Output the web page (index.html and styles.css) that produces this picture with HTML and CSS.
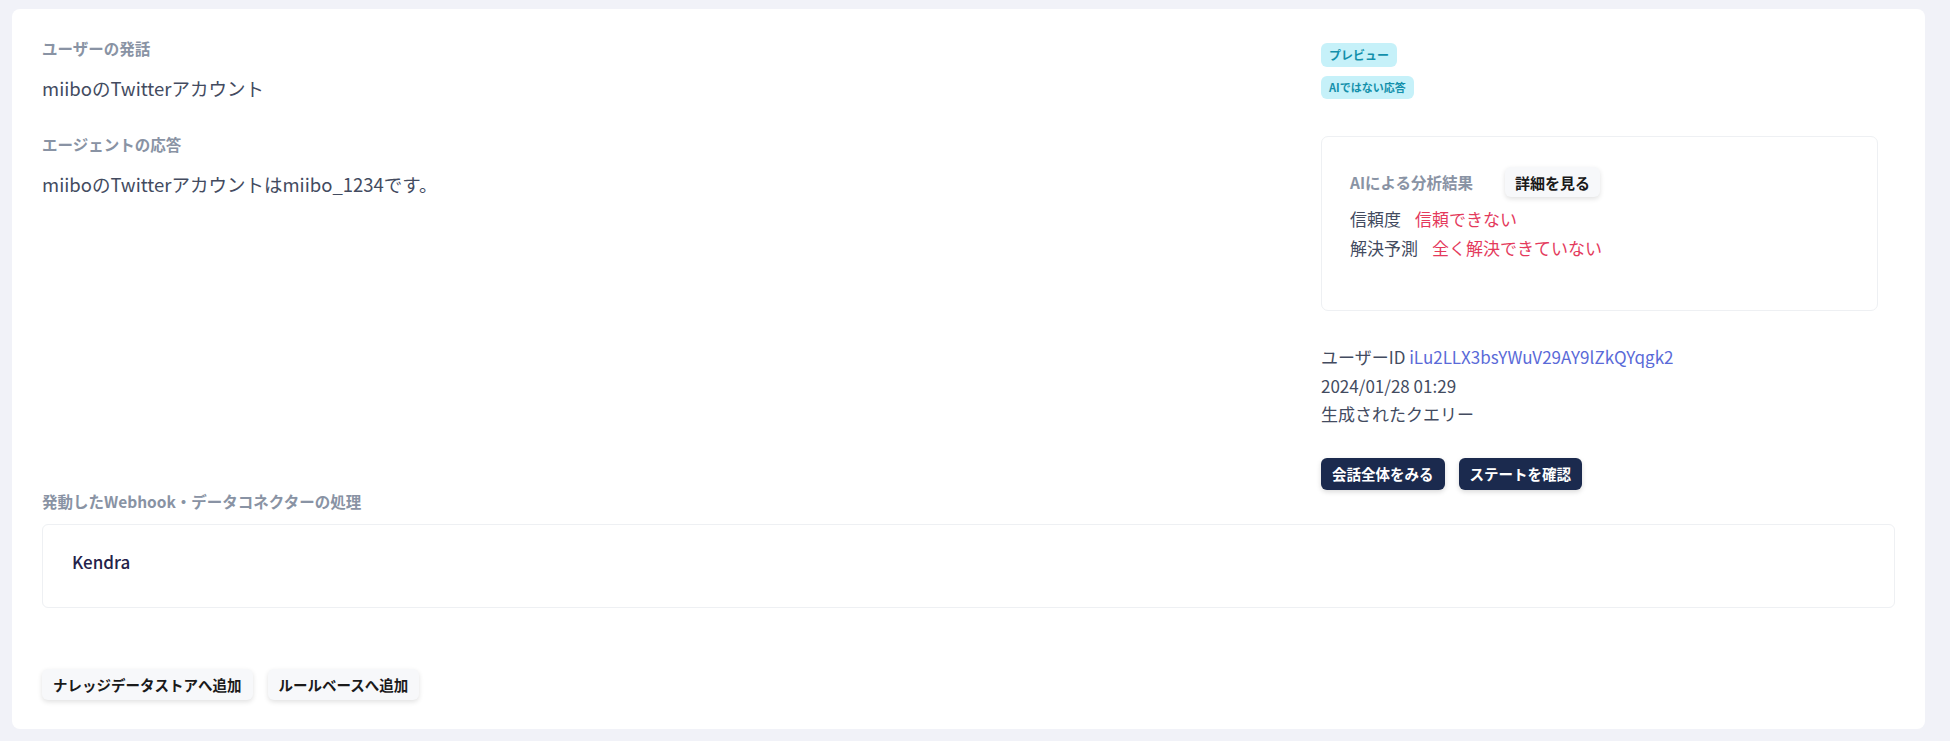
FILE: index.html
```html
<!DOCTYPE html>
<html lang="ja">
<head>
  <meta charset="UTF-8">
  <title>会話ログ詳細</title>
  <link rel="stylesheet" href="styles.css">
</head>
<body>
  <div class="card">
    <div class="top">
      <div class="main">
        <div class="label">ユーザーの発話</div>
        <p class="value">miiboのTwitterアカウント</p>
        <div class="label label-gap">エージェントの応答</div>
        <p class="value">miiboのTwitterアカウントはmiibo_1234です。</p>
      </div>

      <div class="side">
        <div class="badges">
          <span class="badge">プレビュー</span>
          <span class="badge badge-sm">AIではない応答</span>
        </div>

        <div class="analysis">
          <div class="analysis-head">
            <span class="analysis-title">AIによる分析結果</span>
            <button class="btn-light btn-detail">詳細を見る</button>
          </div>
          <div class="row"><span class="key">信頼度</span><span class="bad">信頼できない</span></div>
          <div class="row"><span class="key">解決予測</span><span class="bad">全く解決できていない</span></div>
        </div>

        <div class="meta">
          <div>ユーザーID <a href="#" class="uid">iLu2LLX3bsYWuV29AY9lZkQYqgk2</a></div>
          <div>2024/01/28 01:29</div>
          <div>生成されたクエリー</div>
        </div>

        <div class="actions">
          <button class="btn-dark">会話全体をみる</button>
          <button class="btn-dark">ステートを確認</button>
        </div>
      </div>
    </div>

    <div class="label">発動したWebhook・データコネクターの処理</div>
    <div class="connector">
      <span class="connector-name">Kendra</span>
    </div>

    <div class="bottom-actions">
      <button class="btn-light">ナレッジデータストアへ追加</button>
      <button class="btn-light">ルールベースへ追加</button>
    </div>
  </div>
</body>
</html>
```

FILE: styles.css
```css
body { margin: 0; background: #f1f2f8; font-family: "Noto Sans CJK JP", "Noto Sans", sans-serif; color: #434b5f; }
.card { margin: 9px 25px 12px 12px; height: 720px; box-sizing: border-box; background: #fff; border-radius: 8px; padding: 28px 30px 29px 30px; }

.top { display: grid; grid-template-columns: 1fr 574px; }
.label { font-size: 15.5px; font-weight: 700; color: #8993a4; line-height: 22px; }
.label-gap { margin-top: 31px; }
.value { margin: 15px 0 0; font-size: 18.5px; line-height: 28px; color: #434b5f; }

.side { padding-right: 17px; }
.badges { display: flex; flex-direction: column; align-items: flex-start; gap: 9px; margin-top: 6px; }
.badge { background: #c6f1f9; color: #1390ab; font-weight: 700; font-size: 12px; border-radius: 6px; height: 24px; line-height: 24px; padding: 0 8px; }
.badge-sm { font-size: 11px; height: 23px; line-height: 23px; padding: 0 8px; }

.analysis { margin-top: 37px; height: 175px; box-sizing: border-box; border: 1px solid #eef0f3; border-radius: 7px; padding: 30px 28px; }
.analysis-head { display: flex; align-items: center; gap: 32px; margin-bottom: 7px; }
.analysis-title { font-size: 15.5px; font-weight: 700; color: #8993a4; }
.row { font-size: 17px; line-height: 29px; }
.key { color: #434b5f; margin-right: 14px; }
.bad { color: #e43a5c; }

.meta { margin-top: 32px; font-size: 17px; line-height: 28.5px; color: #434b5f; }
.uid { color: #5a6ad8; text-decoration: none; }

.actions { display: flex; gap: 14px; margin-top: 29px; }
button { font-family: inherit; font-weight: 700; font-size: 14.5px; border: none; border-radius: 6px; cursor: pointer; }
.btn-dark { background: #1b2a4e; color: #fff; height: 32px; padding: 0 11px; box-shadow: 0 2px 5px rgba(0,0,0,0.15); }
.btn-light { background: #f7f8fa; color: #1a1a1a; height: 31px; padding: 0 11px; box-shadow: 0 2px 5px rgba(0,0,0,0.12); }
.btn-detail { height: 30px; font-size: 15px; padding: 0 10px; }

.connector { margin-top: 12px; height: 84px; box-sizing: border-box; border: 1px solid #eef0f3; border-radius: 6px; padding: 25px 29px; }
.connector-name { font-size: 17px; font-weight: 500; color: #23224a; line-height: 24px; }

.bottom-actions { display: flex; gap: 15px; margin-top: 61px; }
```
